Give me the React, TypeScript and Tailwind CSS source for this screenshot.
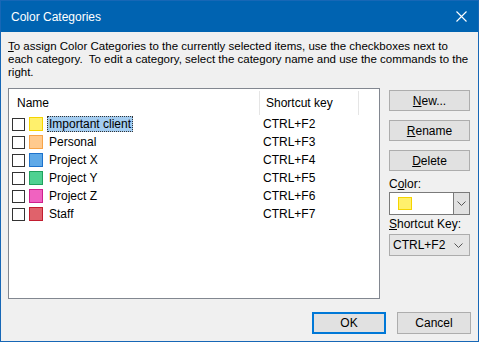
import React from "react";

const categories = [
  { name: "Important client", key: "CTRL+F2", fill: "bg-[#fff06c]", edge: "border-[#f5d400]", selected: true },
  { name: "Personal", key: "CTRL+F3", fill: "bg-[#ffca8e]", edge: "border-[#f7a447]" },
  { name: "Project X", key: "CTRL+F4", fill: "bg-[#5ea9e8]", edge: "border-[#1d72cc]" },
  { name: "Project Y", key: "CTRL+F5", fill: "bg-[#4fd191]", edge: "border-[#20a15d]" },
  { name: "Project Z", key: "CTRL+F6", fill: "bg-[#f062c0]", edge: "border-[#cf1f8d]" },
  { name: "Staff", key: "CTRL+F7", fill: "bg-[#e0626b]", edge: "border-[#c21d30]" },
];

const Chevron = () => (
  <svg width="9" height="5" viewBox="0 0 9 5" className="block">
    <path d="M0.5 0.5 L4.5 4.5 L8.5 0.5" fill="none" stroke="#555" strokeWidth="1" />
  </svg>
);

const SideButton = ({ mnemonic, rest }: { mnemonic: string; rest: string }) => (
  <button className="h-[21px] w-[81px] border border-[#adadad] bg-[#e1e1e1] text-[12px] leading-none text-black">
    <span className="underline underline-offset-1">{mnemonic}</span>
    {rest}
  </button>
);

export default function App() {
  return (
    <div
      className="w-[479px] h-[342px] border border-[#1767b6] bg-[#f0f0f0] flex flex-col overflow-hidden text-black"
      style={{ fontFamily: '"Liberation Sans", Arial, sans-serif' }}
    >
      {/* title bar */}
      <div className="h-[31px] shrink-0 bg-[#0063b1] flex items-center justify-between pl-[10px] pr-[10px]">
        <span className="text-white text-[12px]">Color Categories</span>
        <svg width="11" height="11" viewBox="0 0 11 11" className="block mr-[1px]">
          <path d="M0.5 0.5 L10.5 10.5 M10.5 0.5 L0.5 10.5" stroke="#fff" strokeWidth="1.1" />
        </svg>
      </div>

      <div className="flex-1 flex flex-col px-[7px] pt-[8px]">
        <p className="text-[11.5px] leading-[13px] whitespace-nowrap">
          <span className="underline">T</span>o assign Color Categories to the currently selected items, use the checkboxes next to
          <br />
          each category.&nbsp; To edit a category, select the category name and use the commands to the
          <br />
          right.
        </p>

        <div className="mt-[9px] flex items-start">
          {/* list */}
          <div className="w-[372px] h-[211px] border border-[#828790] bg-white flex flex-col">
            <div className="h-[26px] flex items-stretch text-[12px]">
              <div className="w-[251px] pl-[8px] flex items-center border-r border-[#e5e5e5] mt-[2px]">Name</div>
              <div className="w-[99px] pl-[6px] flex items-center border-r border-[#e5e5e5] mt-[2px]">Shortcut key</div>
            </div>
            {categories.map((c) => (
              <div key={c.name} className="h-[18px] flex items-center text-[12px]">
                <div className="w-[251px] flex items-center pl-[3px]">
                  <div className="w-[13px] h-[13px] border border-[#333] bg-white" />
                  <div className={`ml-[4px] w-[14px] h-[14px] border ${c.fill} ${c.edge}`} />
                  {c.selected ? (
                    <span className="ml-[4px] px-[1px] h-[16px] leading-[14px] bg-[#a4cdf1] border border-dotted border-[#333]">
                      {c.name}
                    </span>
                  ) : (
                    <span className="ml-[6px]">{c.name}</span>
                  )}
                </div>
                <div className="pl-[3px]">{c.key}</div>
              </div>
            ))}
          </div>

          {/* right column */}
          <div className="ml-[9px] w-[81px] flex flex-col pt-[2px] text-[12px]">
            <SideButton mnemonic="N" rest="ew..." />
            <div className="h-[9px]" />
            <SideButton mnemonic="R" rest="ename" />
            <div className="h-[9px]" />
            <SideButton mnemonic="D" rest="elete" />
            <div className="mt-[6px] h-[14px] leading-[14px]">
              C<span className="underline">o</span>lor:
            </div>
            <div className="mt-[1px] h-[23px] border border-[#7a7a7a] bg-white flex">
              <div className="flex-1 flex items-center pl-[8px]">
                <div className="w-[14px] h-[13px] bg-[#fff06c] border border-[#f5d400]" />
              </div>
              <div className="w-[16px] bg-[#e1e1e1] border-l border-[#7a7a7a] flex items-center justify-center">
                <Chevron />
              </div>
            </div>
            <div className="mt-[2px] h-[14px] leading-[14px]">
              <span className="underline">S</span>hortcut Key:
            </div>
            <div className="mt-[3px] h-[22px] border border-[#acacac] bg-[#e5e5e5] flex items-center justify-between pl-[3px] pr-[6px]">
              <span>CTRL+F2</span>
              <Chevron />
            </div>
          </div>
        </div>

        <div className="mt-[13px] flex justify-end gap-[11px] text-[12px]">
          <button className="w-[74px] h-[22px] border-2 border-[#0078d7] bg-[#e1e1e1]">OK</button>
          <button className="w-[74px] h-[22px] border border-[#adadad] bg-[#e1e1e1]">Cancel</button>
        </div>
      </div>
    </div>
  );
}
